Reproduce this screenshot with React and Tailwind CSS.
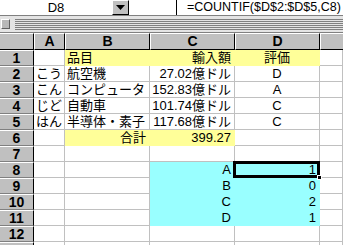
import React from "react";

const FONT = { fontFamily: '"Liberation Sans", "Noto Sans CJK JP", sans-serif' };

const rows = [
  ["1", { t: "" }, { t: "品目", f: "y", a: "l" }, { t: "輸入額", f: "y", a: "r" }, { t: "評価", f: "y", a: "c" }],
  ["2", { t: "こう" }, { t: "航空機" }, { t: "27.02億ドル", a: "r" }, { t: "D", a: "c" }],
  ["3", { t: "こん" }, { t: "コンピュータ" }, { t: "152.83億ドル", a: "r" }, { t: "A", a: "c" }],
  ["4", { t: "じど" }, { t: "自動車" }, { t: "101.74億ドル", a: "r" }, { t: "C", a: "c" }],
  ["5", { t: "はん" }, { t: "半導体・素子" }, { t: "117.68億ドル", a: "r" }, { t: "C", a: "c" }],
  ["6", { t: "" }, { t: "合計", f: "y", a: "r" }, { t: "399.27", f: "y", a: "r" }, { t: "" }],
  ["7", { t: "" }, { t: "" }, { t: "" }, { t: "" }],
  ["8", { t: "" }, { t: "" }, { t: "A", f: "c", a: "r" }, { t: "1", f: "c", a: "r", sel: true }],
  ["9", { t: "" }, { t: "" }, { t: "B", f: "c", a: "r" }, { t: "0", f: "c", a: "r" }],
  ["10", { t: "" }, { t: "" }, { t: "C", f: "c", a: "r" }, { t: "2", f: "c", a: "r" }],
  ["11", { t: "" }, { t: "" }, { t: "D", f: "c", a: "r" }, { t: "1", f: "c", a: "r" }],
  ["12", { t: "" }, { t: "" }, { t: "" }, { t: "" }],
  ["", { t: "" }, { t: "" }, { t: "" }, { t: "" }],
];

function Cell({ c }) {
  const fill =
    c.f === "y"
      ? "bg-[#ffff99] border-[#ffff99]"
      : c.f === "c"
      ? "bg-[#99ffff] border-[#99ffff]"
      : "bg-white border-[#c0c0c0]";
  const align = c.a === "r" ? "text-right pr-[3px]" : c.a === "c" ? "text-center" : "text-left pl-[2px]";
  return (
    <div
      className={`h-[16px] border-r border-b text-[13px] leading-[15px] whitespace-nowrap text-black ${fill} ${align} ${
        c.sel ? "relative" : "overflow-hidden"
      }`}
    >
      {c.t}
      {c.sel && (
        <div className="absolute left-[-2px] top-[-1px] right-[-1px] bottom-[-1px] border-[3px] border-black z-10">
          <div className="absolute right-[-5px] bottom-[-5px] w-[5px] h-[5px] bg-black border border-white" />
        </div>
      )}
    </div>
  );
}

function RowHead({ n }) {
  return (
    <div className="h-[16px] bg-[#c0c0c0] border-t border-t-white border-b border-b-[#808080] border-r border-r-black text-center text-[14px] leading-[14px] font-bold text-black">
      {n}
    </div>
  );
}

function ColHead({ l, last }) {
  return (
    <div
      className={`h-[17px] bg-[#c0c0c0] border-t border-t-white border-l border-l-white border-b border-b-black ${
        last ? "" : "border-r border-r-black"
      } text-center text-[14px] leading-[15px] font-bold text-black`}
    >
      {l}
    </div>
  );
}

export default function App() {
  return (
    <div className="w-[343px] h-[245px] overflow-hidden bg-white" style={FONT}>
      {/* formula bar */}
      <div className="flex h-[16px] bg-white border-b border-[#808080]">
        <div className="w-[112px] text-center text-[13px] leading-[15px] text-black">D8</div>
        <div className="w-[17px] h-[15px] bg-[#c0c0c0] border-t border-l border-t-white border-l-white border-b border-r border-b-black border-r-black flex items-center justify-center">
          <svg width="9" height="6" viewBox="0 0 9 6">
            <polygon points="0,0 9,0 4.5,5" fill="#000" />
          </svg>
        </div>
        <div className="w-[47px]" />
        <div className="w-px h-[15px] bg-black" />
        <div className="pl-[10px] text-[12.5px] leading-[15px] text-black whitespace-nowrap">=COUNTIF($D$2:$D$5,C8)</div>
      </div>
      {/* toolbar strip */}
      <div className="flex items-center h-[17px] bg-[#e4e4e4] border-b border-[#808080]">
        <div className="ml-[1px] w-[9px] h-[10px] bg-[#b8b8b8] border border-t-white border-l-white border-b-[#606060] border-r-[#606060]" />
        <div className="ml-[5px] flex-1 flex flex-col gap-px">
          <div className="h-px bg-[#808080]" />
          <div className="h-px bg-[#808080]" />
          <div className="h-px bg-[#808080]" />
          <div className="h-px bg-[#808080]" />
          <div className="h-px bg-[#808080]" />
          <div className="h-px bg-[#808080]" />
        </div>
      </div>
      {/* grid */}
      <div className="grid grid-cols-[34px_31px_85px_85px_85px_1fr]">
        <div className="h-[17px] bg-[#c0c0c0] border-t border-t-white border-b border-b-black border-r border-r-black" />
        <ColHead l="A" />
        <ColHead l="B" />
        <ColHead l="C" />
        <ColHead l="D" />
        <ColHead l="" last />
        {rows.map((r, i) => (
          <React.Fragment key={i}>
            <RowHead n={r[0]} />
            <Cell c={r[1]} />
            <Cell c={r[2]} />
            <Cell c={r[3]} />
            <Cell c={r[4]} />
            <Cell c={{ t: "" }} />
          </React.Fragment>
        ))}
      </div>
    </div>
  );
}
